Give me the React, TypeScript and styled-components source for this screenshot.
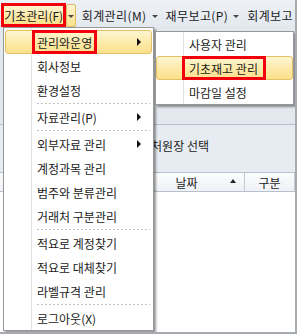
import styled, { createGlobalStyle } from 'styled-components';

const GlobalStyle = createGlobalStyle`
  html, body { margin: 0; padding: 0; background: #ffffff; }
  body {
    font-family: "Noto Sans CJK KR", "Noto Sans", sans-serif;
    font-size: 12px;
    color: #1b1b1b;
  }
`;

const yellow = 'linear-gradient(#fef5d2 0%, #fdeaa8 55%, #fbe08c 100%)';

const Screen = styled.div`
  position: relative;
  width: 297px;
  height: 334px;
  box-sizing: border-box;
  overflow: hidden;
  display: flex;
  flex-direction: column;
  background: #e5eaf0;
  border-right: 2px solid #a6abb2;
  border-bottom: 2px solid #a6abb2;
`;

const MenuBar = styled.div`
  display: flex;
  align-items: stretch;
  height: 28px;
  box-sizing: border-box;
  padding: 3px 0 1px 1px;
  background: linear-gradient(#eef2f7, #e3e8ef);
  white-space: nowrap;
  letter-spacing: 0.4px;
`;

const ActiveTop = styled.div`
  display: flex;
  align-items: center;
  justify-content: center;
  width: 71px;
  box-sizing: border-box;
  border: 3px solid #f2000c;
  background: ${yellow};
  letter-spacing: 0;
`;

const SplitArrow = styled.div`
  display: flex;
  align-items: center;
  justify-content: center;
  width: 10px;
  margin-top: 1px;
  box-sizing: border-box;
  border: 1px solid #dfbb63;
  border-radius: 2px;
  background: ${yellow};
`;

const TopMenu = styled.div`
  display: flex;
  align-items: center;
  gap: 5px;
  padding: 0 2px 0 6px;
`;

const Caret = styled.span<{ $up?: boolean }>`
  width: 0;
  height: 0;
  margin-top: 2px;
  border-left: 3px solid transparent;
  border-right: 3px solid transparent;
  ${(p) => (p.$up ? 'border-bottom: 3px solid #333;' : 'border-top: 3px solid #444;')}
`;

const Toolbar = styled.div`
  height: 96px;
  background: #e3e8ef;
  border-bottom: 1px solid #b6bfcb;
`;

const FilterRow = styled.div`
  height: 48px;
  box-sizing: border-box;
  padding: 12px 0 0 129px;
  border-bottom: 1px solid #b6bfcb;
  background: #e7ecf2;
  white-space: nowrap;
`;

const GridHeader = styled.div`
  display: flex;
  height: 19px;
  box-sizing: border-box;
  border-bottom: 1px solid #b9c1cc;
  background: linear-gradient(#fbfcfd, #eef1f5);
`;

const HeaderGap = styled.div`
  width: 129px;
`;

const HeaderCell = styled.div<{ $w: number }>`
  position: relative;
  width: ${(p) => p.$w}px;
  display: flex;
  align-items: center;
  justify-content: center;
  border-right: 1px solid #c3cad3;
`;

const SortGlyph = styled.span`
  position: absolute;
  right: 8px;
  top: 6px;
  width: 0;
  height: 0;
  border-left: 3px solid transparent;
  border-right: 3px solid transparent;
  border-bottom: 4px solid #222;
`;

const GridBody = styled.div`
  flex: 1;
  background: #ffffff;
`;

const Dropdown = styled.div<{ $left: number; $top: number; $w: number }>`
  position: absolute;
  left: ${(p) => p.$left}px;
  top: ${(p) => p.$top}px;
  width: ${(p) => p.$w}px;
  box-sizing: border-box;
  border: 1px solid #979797;
  background: #ffffff;
  box-shadow: 2px 2px 2px rgba(0, 0, 0, 0.4);
  white-space: nowrap;

  &::before {
    content: '';
    position: absolute;
    left: 27px;
    top: 0;
    bottom: 0;
    width: 1px;
    background: #e0e2e4;
    box-shadow: 1px 0 #ffffff;
  }
`;

const MainList = styled(Dropdown)`
  padding: 2px 1px 0;
`;

const Row = styled.div<{ $active?: boolean; $pad: number }>`
  position: relative;
  display: flex;
  align-items: center;
  height: 24px;
  box-sizing: border-box;
  padding-left: ${(p) => p.$pad}px;
  border: 1px solid ${(p) => (p.$active ? '#e3c266' : 'transparent')};
  border-radius: 3px;
  background: ${(p) => (p.$active ? yellow : 'transparent')};
`;

const Marked = styled.span<{ $shift: number; $padL: number; $padR: number }>`
  align-self: stretch;
  display: flex;
  align-items: center;
  margin: -1px 0 -1px -${(p) => p.$shift}px;
  padding: 0 ${(p) => p.$padR}px 0 ${(p) => p.$padL}px;
  border: 3px solid #f2000c;
`;

const SubArrow = styled.span`
  margin-left: auto;
  margin-right: 10px;
  width: 0;
  height: 0;
  border-top: 4px solid transparent;
  border-bottom: 4px solid transparent;
  border-left: 4px solid #111;
`;

const Separator = styled.div`
  position: relative;
  height: 3px;
  margin-left: 32px;
  margin-right: 2px;
  background: repeating-linear-gradient(90deg, #c4c4c4 0 2px, transparent 2px 4px) center / 100% 1px no-repeat;
`;

type Item = { label: string; sub?: boolean } | 'sep';

const mainItems: Item[] = [
  { label: '회사정보' },
  { label: '환경설정' },
  'sep',
  { label: '자료관리(P)', sub: true },
  'sep',
  { label: '외부자료 관리', sub: true },
  { label: '계정과목 관리' },
  { label: '범주와 분류관리' },
  { label: '거래처 구분관리' },
  'sep',
  { label: '적요로 계정찾기' },
  { label: '적요로 대체찾기' },
  { label: '라벨규격 관리' },
  'sep',
  { label: '로그아웃(X)' },
];

export default function App() {
  return (
    <>
      <GlobalStyle />
      <Screen>
        <MenuBar>
          <ActiveTop>기초관리(F)</ActiveTop>
          <SplitArrow>
            <Caret />
          </SplitArrow>
          <TopMenu>
            회계관리(M) <Caret />
          </TopMenu>
          <TopMenu>
            재무보고(P) <Caret />
          </TopMenu>
          <TopMenu>회계보고</TopMenu>
        </MenuBar>

        <Toolbar />
        <FilterRow>거래처원장 선택</FilterRow>
        <GridHeader>
          <HeaderGap />
          <HeaderCell $w={115}>
            날짜
            <SortGlyph />
          </HeaderCell>
          <HeaderCell $w={49}>구분</HeaderCell>
        </GridHeader>
        <GridBody />

        <MainList $left={3} $top={27} $w={151}>
          <Row $active $pad={31}>
            <Marked $shift={5} $padL={2} $padR={2}>
              관리와운영
            </Marked>
            <SubArrow />
          </Row>
          {mainItems.map((item, i) =>
            item === 'sep' ? (
              <Separator key={i} />
            ) : (
              <Row key={i} $pad={31}>
                {item.label}
                {item.sub && <SubArrow />}
              </Row>
            )
          )}
        </MainList>

        <Dropdown $left={155} $top={31} $w={139}>
          <Row $pad={32}>사용자 관리</Row>
          <Row $active $pad={32}>
            <Marked $shift={7} $padL={4} $padR={5}>
              기초재고 관리
            </Marked>
          </Row>
          <Row $pad={32}>마감일 설정</Row>
        </Dropdown>
      </Screen>
    </>
  );
}
